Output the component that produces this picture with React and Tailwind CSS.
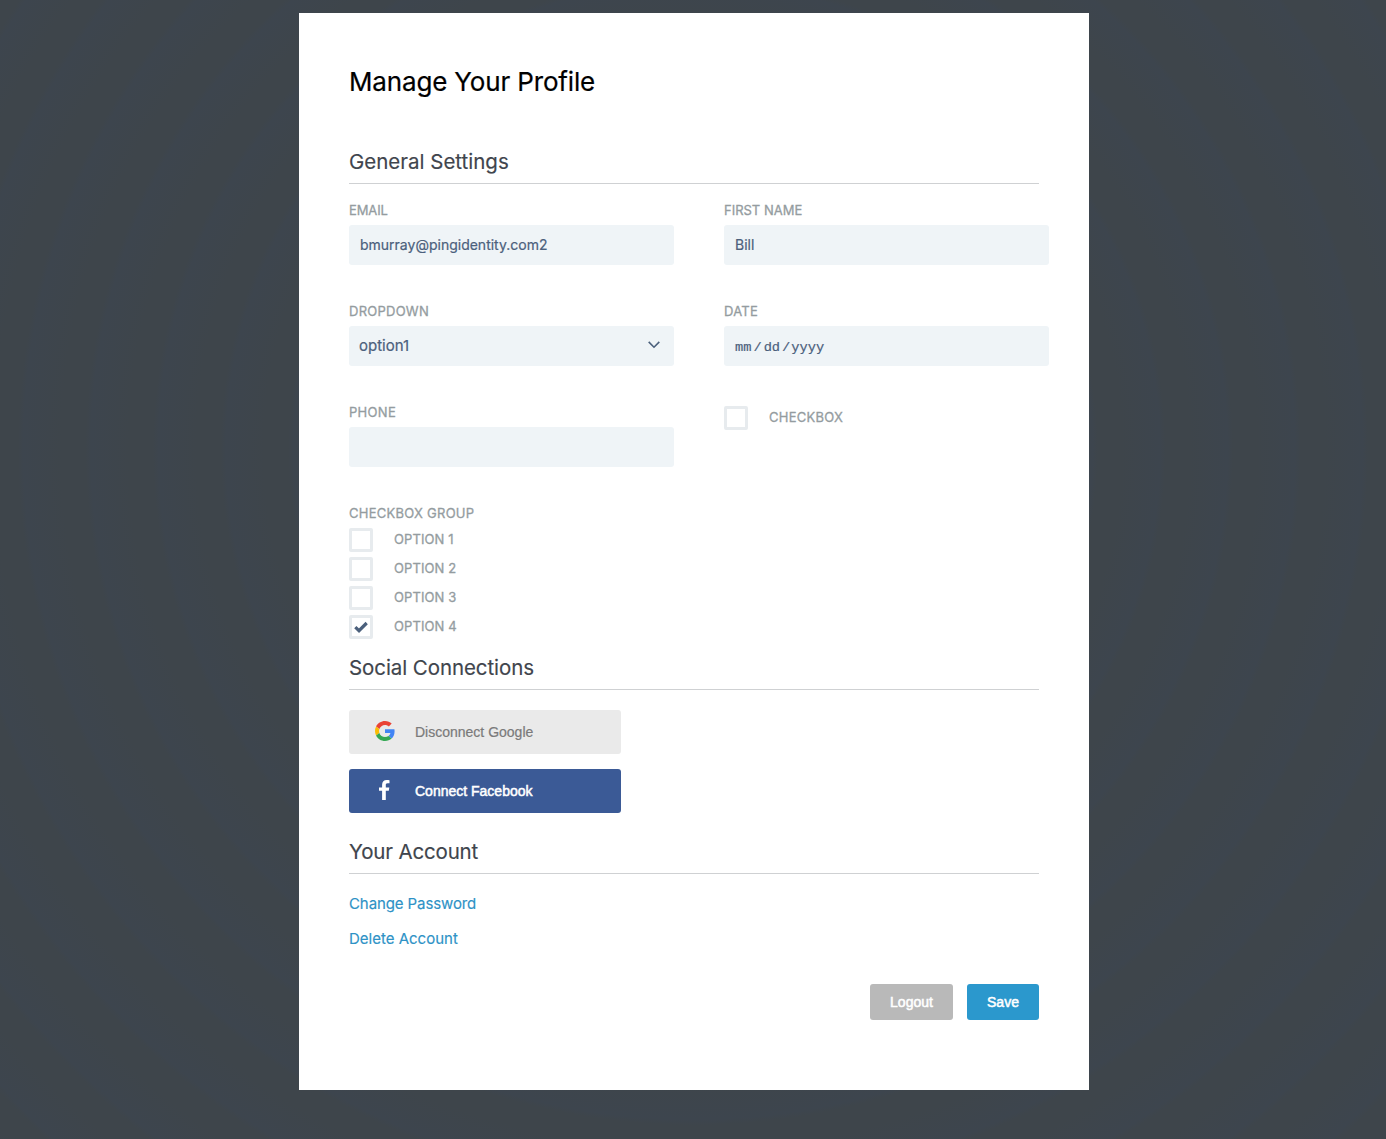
function Heading({ children, className = "" }) {
  return (
    <h2 className={`flex h-[33px] w-[690px] items-start border-b border-[#cfd1d3] text-[20.5px] leading-[22px] text-[#3f454d] [-webkit-text-stroke:0.15px_#3f454d] ${className}`}>
      {children}
    </h2>
  );
}

function Label({ children, className = "" }) {
  return <div className={`h-[15px] text-[13px] leading-[15px] text-[#949ca0] [-webkit-text-stroke:0.3px_#949ca0] ${className}`}>{children}</div>;
}

function Field({ label, labelClass, children }) {
  return (
    <div className="w-[325px]">
      <Label className={labelClass}>{label}</Label>
      <div className="mt-[7px] flex h-10 items-center justify-between rounded-[3px] bg-[#eff4f7] pl-[11px] pr-[14px] text-sm text-[#4b607c] [-webkit-text-stroke:0.2px_#4b607c]">
        {children}
      </div>
    </div>
  );
}

function Check({ label, checked, labelClass = "" }) {
  return (
    <div className="flex h-6 items-start">
      <span className="flex size-6 items-center justify-center rounded-[2px] border-[3px] border-[#e7ebee] bg-white">
        {checked && (
          <svg width="14" height="12" viewBox="0 0 14 12" className="-mt-px shrink-0" fill="none" stroke="#4b607c" strokeWidth="3.2">
            <path d="M1.3 6.2 5 9.7 12.7 2" />
          </svg>
        )}
      </span>
      <Label className={`ml-[21px] mt-1 ${labelClass}`}>{label}</Label>
    </div>
  );
}

function GoogleIcon() {
  return (
    <svg width="20" height="20" viewBox="0 0 48 48">
      <path fill="#EA4335" d="M24 9.5c3.54 0 6.71 1.22 9.21 3.6l6.85-6.85C35.9 2.38 30.47 0 24 0 14.62 0 6.51 5.38 2.56 13.22l7.98 6.19C12.43 13.72 17.74 9.5 24 9.5z" />
      <path fill="#4285F4" d="M46.98 24.55c0-1.57-.15-3.09-.38-4.55H24v9.02h12.94c-.58 2.96-2.26 5.48-4.78 7.18l7.73 6c4.51-4.18 7.09-10.36 7.09-17.65z" />
      <path fill="#FBBC05" d="M10.53 28.59A14.5 14.5 0 0 1 9.77 24c0-1.6.27-3.14.76-4.59l-7.98-6.19A23.9 23.9 0 0 0 0 24c0 3.88.92 7.54 2.56 10.78l7.97-6.19z" />
      <path fill="#34A853" d="M24 48c6.48 0 11.93-2.13 15.89-5.81l-7.73-6c-2.15 1.45-4.92 2.3-8.16 2.3-6.26 0-11.57-4.22-13.47-9.91l-7.98 6.19C6.51 42.62 14.62 48 24 48z" />
    </svg>
  );
}

export default function App() {
  return (
    <div className="flex h-[1139px] justify-center overflow-hidden pl-[2px] pt-[13px] font-['Inter',sans-serif] bg-[repeating-radial-gradient(circle_at_693px_450px,#3e454b_0px,#3e454b_24px,#3d454e_62px,#3e454b_67.5px)]">
      <main className="h-[1077px] w-[790px] bg-white px-[50px]">
        <h1 className="pt-[52px] text-[26px] leading-[34px] tracking-[-0.16px] text-black [-webkit-text-stroke:0.2px_black]">Manage Your Profile</h1>

        <Heading className="mt-[52px]">General Settings</Heading>
        <div className="mt-[19px] grid grid-cols-[325px_325px] gap-x-[50px] gap-y-[39px]">
          <Field label="EMAIL" labelClass="tracking-[-0.1px]">bmurray@pingidentity.com2</Field>
          <Field label="FIRST NAME">Bill</Field>
          <Field label="DROPDOWN" labelClass="tracking-[0.26px]">
            <span className="-ml-px text-[15px]">option1</span>
            <svg width="12" height="8" viewBox="0 0 12 8" className="-mt-[3px]" fill="none" stroke="#4b607c" strokeWidth="1.6">
              <path d="M.7 .9 6 6.2l5.300-5.300" />
            </svg>
          </Field>
          <Field label="DATE" labelClass="tracking-[0.25px]">
            <span className="mt-[3px] flex font-['Liberation_Mono',monospace] text-[13.7px]">
              <span>mm</span><span className="ml-[2px]">/</span><span className="ml-[2px]">dd</span><span className="ml-[2px]">/</span><span className="ml-px">yyyy</span>
            </span>
          </Field>
          <Field label="PHONE" labelClass="tracking-[0.3px]" />
          <div className="pt-px">
            <Check label="CHECKBOX" labelClass="tracking-[0.24px]" />
          </div>
        </div>

        <Label className="mt-[39px] tracking-[0.26px]">CHECKBOX GROUP</Label>
        <div className="mt-[7px] flex flex-col gap-[5px]">
          <Check label="OPTION 1" labelClass="tracking-[0.1px]" />
          <Check label="OPTION 2" labelClass="tracking-[0.1px]" />
          <Check label="OPTION 3" labelClass="tracking-[0.1px]" />
          <Check label="OPTION 4" labelClass="tracking-[0.1px]" checked />
        </div>

        <Heading className="mt-[18px] tracking-[-0.08px]">Social Connections</Heading>
        <button className="mt-5 flex h-11 w-[272px] items-center rounded-[3px] bg-[#eaeaea] pl-[26px] font-['Liberation_Sans',sans-serif] text-sm text-[#7a7a7a] [-webkit-text-stroke:0.2px_#7a7a7a]">
          <span className="-mt-[2px]"><GoogleIcon /></span>
          <span className="ml-5">Disconnect Google</span>
        </button>
        <button className="mt-[15px] flex h-11 w-[272px] items-center rounded-[3px] bg-[#3b5a96] pl-[30px] font-['Liberation_Sans',sans-serif] text-sm text-white [-webkit-text-stroke:0.5px_white]">
          <svg width="11" height="20" viewBox="0 0 11 20" className="-mt-[2px]" fill="white" stroke="none">
            <path d="M3.1 20v-9.2H0V7.4h3.1V4.7C3.1 1.7 4.900 0 7.600 0c1.300 0 2.400.1 2.900.2v3.100H8.600C7.100 3.300 6.800 4 6.800 5v2.400h3.500l-.5 3.400h-3V20z" />
          </svg>
          <span className="ml-[25px]">Connect Facebook</span>
        </button>

        <Heading className="mt-[28px] tracking-[-0.16px]">Your Account</Heading>
        <nav className="mt-5 flex flex-col items-start gap-[15px] text-[15px] leading-5 text-[#2e92c6] [-webkit-text-stroke:0.15px_#2e92c6]">
          <a className="tracking-[-0.1px]">Change Password</a>
          <a>Delete Account</a>
        </nav>

        <div className="mt-[35px] flex justify-end gap-[14px] font-['Liberation_Sans',sans-serif] text-sm text-white [-webkit-text-stroke:0.5px_white]">
          <button className="h-9 w-[83px] rounded-[3px] bg-[#b9b9b9]">Logout</button>
          <button className="h-9 w-[72px] rounded-[3px] bg-[#2b98cd]">Save</button>
        </div>
      </main>
    </div>
  );
}
